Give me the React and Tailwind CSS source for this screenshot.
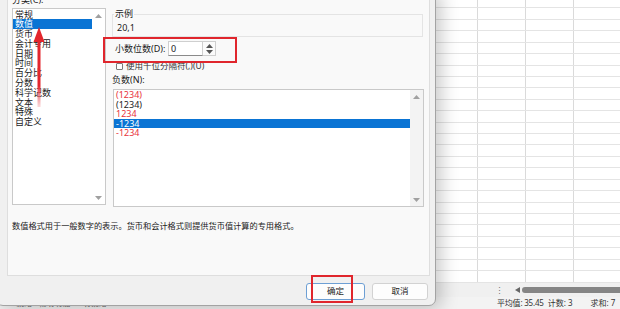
import React from 'react';

const categories = ['常规', '数值', '货币', '会计专用', '日期', '时间', '百分比', '分数', '科学记数', '文本', '特殊', '自定义'];

const negatives = [
  { text: '(1234)', red: true },
  { text: '(1234)', red: false },
  { text: '1234', red: true },
  { text: '-1234', red: false, selected: true },
  { text: '-1234', red: true },
];

const rows = Array.from({ length: 26 }, (_, i) => i);

const Tri = ({ down, color = '#a0a0a0' }) => (
  <svg width="7" height="4" viewBox="0 0 7 4">
    <path d={down ? 'M0 0 L7 0 L3.5 4 Z' : 'M0 4 L3.5 0 L7 4 Z'} fill={color} />
  </svg>
);

const App = () => {
  return (
    <div className="relative h-[309px] w-[620px] overflow-hidden bg-white font-['Noto_Sans','Noto_Sans_CJK_SC',sans-serif] text-[#1b1b1b]">
      {/* spreadsheet behind the dialog */}
      <div className="flex h-full flex-col">
        <div className="h-[283px] overflow-hidden">
          <div className="-mt-[3px]">
            {rows.map((i) => (
              <div key={i} className="flex h-[11.43px] border-b border-[#e4e4e4]">
                <div className="w-[478px] border-r border-[#dadada]" />
                <div className="w-[48px] border-r border-[#dadada]" />
                <div className="w-[48px] border-r border-[#dadada]" />
                <div className="flex-1" />
              </div>
            ))}
          </div>
        </div>
        <div className="flex h-[14px] items-center bg-[#f0f0f0]">
          <span className="ml-[495px] text-[9px] leading-none text-[#777]">⋮</span>
          <span className="ml-[11px]">
            <svg width="5" height="6" viewBox="0 0 5 6"><path d="M5 0 L0 3 L5 6 Z" fill="#666" /></svg>
          </span>
          <div className="ml-[2px] h-[6px] flex-1 rounded-l-full bg-[#858585]" />
        </div>
        <div className="flex h-[12px] items-center whitespace-nowrap bg-[#f3f3f3] text-[8px] leading-[10px] text-[#333]">
          <span className="ml-[16px] w-[481px] shrink-0 text-[#666]">就绪 &nbsp; 辅助功能: 一切就绪</span>
          <span className="shrink-0 tracking-[-0.2px]">平均值: 35.45</span>
          <span className="ml-[4px] shrink-0">计数: 3</span>
          <span className="ml-[18px] shrink-0">求和: 7</span>
        </div>
      </div>

      {/* format cells dialog */}
      <div className="absolute left-[-4px] top-[-10px] flex h-[316px] w-[440px] flex-col rounded-b-[7px] border border-[#a3a3a3] bg-[#f0f0f0] shadow-[5px_3px_18px_rgba(0,0,0,0.22)]">
        <div className="ml-[10px] flex h-[285px] w-[423px] flex-col border border-[#dedede] bg-[#f9f9f9] pl-[4px] pt-[2px]">
          <div className="flex gap-[6px]">
            {/* category list */}
            <div className="w-[94px]">
              <div className="h-[14px] text-[9px] leading-[12px]">分类(C):</div>
              <div className="flex h-[197px] border border-[#c9c9c9] bg-white">
                <div className="w-[79px] pt-[0.5px] text-[9px] leading-[9.8px]">
                  {categories.map((c, i) => (
                    <div key={c} className={i === 1 ? 'bg-[#0a74d4] pl-[2px] text-white' : 'pl-[2px] text-[#222]'}>
                      {c}
                    </div>
                  ))}
                </div>
                <div className="flex flex-1 flex-col items-center justify-between pb-[4px] pt-[5px]">
                  <Tri />
                  <Tri down />
                </div>
              </div>
            </div>

            {/* right column */}
            <div className="w-[312px] pt-[14px]">
              <fieldset className="w-[311px] border border-[#e4e4e4] px-[1px] pb-[2px]">
                <legend className="px-[1px] text-[9px] leading-[12px]">示例</legend>
                <div className="pl-[3px] pt-[2px] text-[9px] leading-[12px]">20,1</div>
              </fieldset>

              <div className="mt-[4px] flex h-[15px] items-center">
                <span className="ml-[3px] w-[53px] text-[9px] leading-none">小数位数(D):</span>
                <div className="flex h-[15px] w-[35px] items-center border border-[#cfcfcf] border-b-[#8a8a8a] bg-white pl-[2px] text-[9px]">0</div>
                <div className="flex h-[15px] w-[13px] flex-col items-center justify-center gap-[2px] border border-l-0 border-[#cfcfcf] bg-[#fbfbfb]">
                  <Tri color="#555" />
                  <Tri down color="#555" />
                </div>
              </div>

              <div className="mt-[5px] flex h-[10px] items-center">
                <div className="ml-[4px] h-[7px] w-[7px] rounded-[1px] border border-[#7a7a7a] bg-white" />
                <span className="ml-[3px] text-[8.5px] leading-none text-[#333]">使用千位分隔符(,)(U)</span>
              </div>

              <div className="mt-[3px] text-[9px] leading-[12px]">负数(N):</div>

              <div className="ml-[1px] mt-[3px] flex h-[118px] w-[311px] border border-[#c9c9c9] bg-white">
                <div className="w-[296px] text-[9px] leading-[9.5px]">
                  {negatives.map((n, i) => (
                    <div
                      key={i}
                      className={
                        n.selected
                          ? 'bg-[#0a74d4] pl-[2px] text-white'
                          : n.red
                          ? 'pl-[2px] text-[#e8333a]'
                          : 'pl-[2px] text-[#222]'
                      }
                    >
                      {n.text}
                    </div>
                  ))}
                </div>
                <div className="flex flex-1 flex-col items-center justify-between bg-[#f3f3f3] pb-[4px] pt-[5px]">
                  <Tri />
                  <Tri down />
                </div>
              </div>
            </div>
          </div>

          <div className="mt-[13px] text-[8.2px] leading-[12px] text-[#222]">
            数值格式用于一般数字的表示。货币和会计格式则提供货币值计算的专用格式。
          </div>
        </div>

        <div className="flex justify-end gap-[7px] pr-[7px] pt-[7px]">
          <button className="flex h-[17px] w-[59px] items-center justify-center rounded-[3px] border border-[#6d9fd4] bg-[#fdfdfd] text-[8.5px] leading-none">
            确定
          </button>
          <button className="flex h-[17px] w-[56px] items-center justify-center rounded-[3px] border border-[#d2d2d2] bg-[#fdfdfd] text-[8.5px] leading-none">
            取消
          </button>
        </div>
      </div>

      {/* annotations */}
      <div className="absolute left-[103px] top-[37px] h-[26px] w-[134px] border-2 border-[#e0262d]" />
      <div className="absolute left-[311px] top-[275px] h-[28px] w-[42px] border-2 border-[#e0262d]" />
      <svg className="absolute left-[30px] top-[25px]" width="18" height="85" viewBox="0 0 18 85">
        <defs>
          <linearGradient id="shaft" x1="0" y1="0" x2="0" y2="1">
            <stop offset="0" stopColor="#e3262d" />
            <stop offset="0.7" stopColor="#e3262d" />
            <stop offset="1" stopColor="#f2a0a4" stopOpacity="0.4" />
          </linearGradient>
        </defs>
        <rect x="7.5" y="12" width="3" height="70" fill="url(#shaft)" />
        <path d="M9 2 L14.5 17 L3.5 17 Z" fill="#e3262d" />
      </svg>
    </div>
  );
};

export default App;
